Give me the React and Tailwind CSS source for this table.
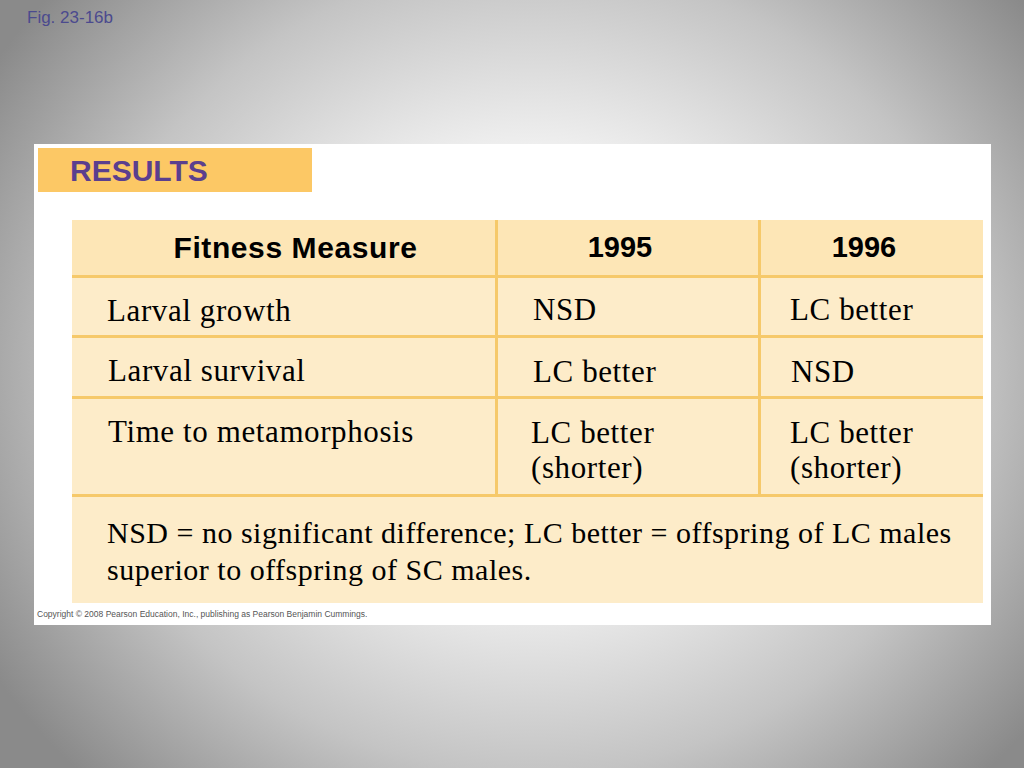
export default function App() {
  const serif = "font-['Liberation_Serif','Times_New_Roman',serif]";
  const sans = "font-['Liberation_Sans',Arial,sans-serif]";
  const cell = `bg-[#fdecc9] text-[31px] leading-[35px] tracking-[0.6px] text-black ${serif}`;
  return (
    <div className="relative w-[1024px] h-[768px] overflow-hidden bg-[radial-gradient(ellipse_62%_75%_at_52%_48%,#ffffff_0%,#f4f4f4_35%,#c4c4c4_70%,#8a8a8a_100%)]">
      <div className={`absolute left-[27px] top-[5px] text-[17px] text-[#4b4a8e] ${sans}`}>Fig. 23-16b</div>

      <div className="absolute left-[34px] top-[144px] w-[957px] h-[481px] bg-white">
        <div className="ml-[4px] mt-[4px] w-[274px] h-[44px] bg-[#fcc865] flex items-center pl-[32px]">
          <span className={`text-[30px] font-bold text-[#5b3f8e] ${sans}`}>RESULTS</span>
        </div>

        <div className="ml-[38px] mt-[28px] w-[911px] bg-[#f6c96a] grid grid-cols-[423px_260px_1fr] grid-rows-[55px_57px_58px_95px_106px] gap-[3px]">
          <div className={`bg-[#fde6b6] flex items-center justify-center pl-[24px] text-[30px] tracking-[0.6px] font-bold text-black ${sans}`}>Fitness Measure</div>
          <div className={`bg-[#fde6b6] flex items-center justify-center pr-[16px] text-[29px] font-bold text-black ${sans}`}>1995</div>
          <div className={`bg-[#fde6b6] flex items-center justify-center pr-[16px] text-[29px] font-bold text-black ${sans}`}>1996</div>

          <div className={`${cell} pl-[35px] pt-[15px]`}>Larval growth</div>
          <div className={`${cell} pl-[35px] pt-[14px]`}>NSD</div>
          <div className={`${cell} pl-[29px] pt-[14px]`}>LC better</div>

          <div className={`${cell} pl-[36px] pt-[15px]`}>Larval survival</div>
          <div className={`${cell} pl-[35px] pt-[16px]`}>LC better</div>
          <div className={`${cell} pl-[30px] pt-[16px]`}>NSD</div>

          <div className={`${cell} pl-[36px] pt-[15px]`}>Time to metamorphosis</div>
          <div className={`${cell} pl-[33px] pt-[16px]`}>LC better<br />(shorter)</div>
          <div className={`${cell} pl-[29px] pt-[16px]`}>LC better<br />(shorter)</div>

          <div className={`col-span-3 bg-[#fdecc9] pl-[35px] pt-[17px] text-[30px] leading-[37px] tracking-[0.5px] text-black ${serif}`}>
            NSD = no significant difference; LC better = offspring of LC males<br />superior to offspring of SC males.
          </div>
        </div>

        <div className={`ml-[3px] mt-[5px] text-[8.5px] text-[#555] ${sans}`}>Copyright © 2008 Pearson Education, Inc., publishing as Pearson Benjamin Cummings.</div>
      </div>
    </div>
  );
}
